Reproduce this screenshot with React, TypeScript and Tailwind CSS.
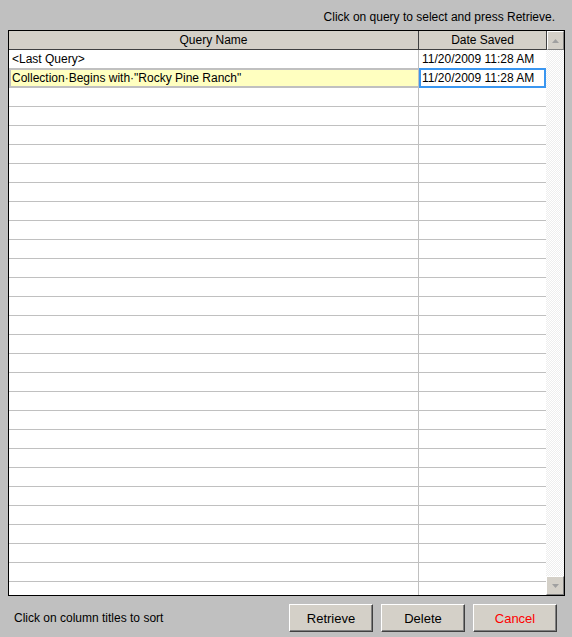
import React from 'react';

const rows = [
  { name: '<Last Query>', date: '11/20/2009 11:28 AM', selected: false },
  { name: 'Collection·Begins with·"Rocky Pine Ranch"', date: '11/20/2009 11:28 AM', selected: true },
];

const EMPTY_ROWS = 27;

const Arrow = ({ up }: { up?: boolean }) => (
  <svg width="7" height="4" viewBox="0 0 7 4">
    <path d={up ? 'M0 4 L3.5 0 L7 4 Z' : 'M0 0 L3.5 4 L7 0 Z'} fill="#a0a0a0" />
  </svg>
);

const ScrollButton = ({ up }: { up?: boolean }) => (
  <div className="h-[19px] w-full bg-[#d4d0c8] border border-t-white border-l-white border-r-[#808080] border-b-[#808080] flex items-center justify-center">
    <Arrow up={up} />
  </div>
);

const WinButton = ({ label, danger }: { label: string; danger?: boolean }) => (
  <button
    className={`w-[84px] h-[28px] bg-[#d4d0c8] border border-t-white border-l-white border-r-[#404040] border-b-[#404040] shadow-[inset_-1px_-1px_0_#808080] text-[13px] leading-none ${danger ? 'text-[#ff0000]' : 'text-black'}`}
  >
    {label}
  </button>
);

export default function App() {
  return (
    <div className="w-[572px] h-[637px] bg-[#c0c0c0] text-black text-[12px] font-['Liberation_Sans',Arial,sans-serif] overflow-hidden">
      {/* top hint */}
      <div className="h-[30px] pt-[10px] pr-[17px] text-right leading-[14px]">
        Click on query to select and press Retrieve.
      </div>

      {/* table */}
      <div className="ml-[8px] w-[557px] h-[566px] border border-black bg-white flex overflow-hidden">
        <div className="w-[537px] flex flex-col">
          {/* header */}
          <div className="flex h-[19px] bg-[#d4d0c8] border-b border-[#404040] shrink-0">
            <div className="w-[410px] border-r border-[#404040] flex items-center justify-center leading-none">
              Query Name
            </div>
            <div className="flex-1 flex items-center justify-center leading-none">Date Saved</div>
          </div>

          {/* body */}
          <div className="flex-1 overflow-hidden">
            {rows.map((r, i) => (
              <div key={i} className="flex h-[19px] border-b border-[#c0c0c0]">
                <div
                  className={`w-[410px] border-r border-[#c0c0c0] flex items-center leading-none ${
                    r.selected ? 'bg-[#ffffc0] border-2 border-[#3a96f0] -mt-px h-[20px] pl-[1px]' : 'pl-[3px]'
                  }`}
                >
                  {r.name}
                </div>
                <div
                  className={`flex-1 flex items-center leading-none ${
                    r.selected ? 'border-2 border-[#3a96f0] -mt-px h-[20px] pl-[1px]' : 'pl-[3px]'
                  }`}
                >
                  {r.date}
                </div>
              </div>
            ))}
            {Array.from({ length: EMPTY_ROWS }).map((_, i) => (
              <div key={`e${i}`} className="flex h-[19px] border-b border-[#c0c0c0]">
                <div className="w-[410px] border-r border-[#c0c0c0]" />
                <div className="flex-1" />
              </div>
            ))}
          </div>
        </div>

        {/* scrollbar */}
        <div className="flex-1 flex flex-col bg-[repeating-conic-gradient(#ffffff_0_25%,#eeeeee_0_50%)] bg-[length:2px_2px]">
          <div className="border-l border-[#404040]">
            <ScrollButton up />
          </div>
          <div className="flex-1" />
          <ScrollButton />
        </div>
      </div>

      {/* footer */}
      <div className="flex items-center mt-[8px] h-[28px]">
        <div className="pl-[14px] flex-1 leading-none">Click on column titles to sort</div>
        <div className="flex gap-[8px] pr-[15px]">
          <WinButton label="Retrieve" />
          <WinButton label="Delete" />
          <WinButton label="Cancel" danger />
        </div>
      </div>
    </div>
  );
}
